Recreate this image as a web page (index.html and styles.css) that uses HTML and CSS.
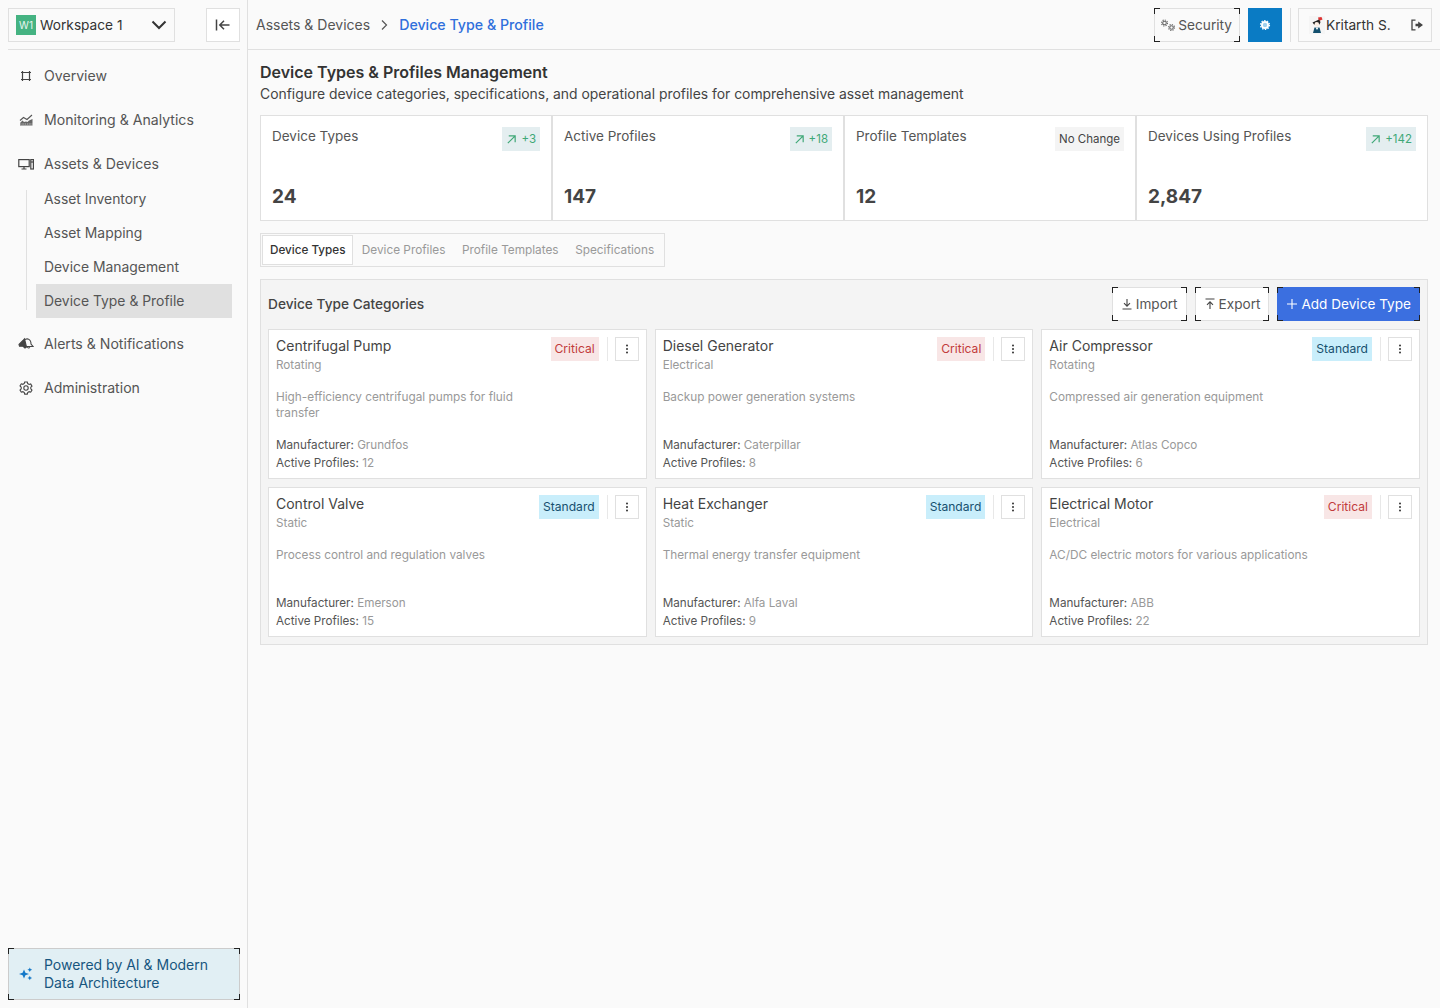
FILE: index.html
```html
<!DOCTYPE html>
<html lang="en">
<head>
<meta charset="utf-8">
<title>Device Type &amp; Profile</title>
<link rel="stylesheet" href="styles.css">
</head>
<body>
<div class="app">
  <aside class="sidebar">
    <div class="side-top">
      <button class="ws-select">
        <span class="ws-badge">W1</span>
        <span class="ws-name">Workspace 1</span>
        <svg class="ws-chev" width="16" height="16" viewBox="0 0 16 16"><path d="M1.500 4.500 8 11l6.500-6.500" fill="none" stroke="#333" stroke-width="2"/></svg>
      </button>
      <button class="collapse">
        <svg width="16" height="16" viewBox="0 0 16 16" fill="none" stroke="#444" stroke-width="1.500"><path d="M1.500 2.500v11M14.500 8H5M9 3.800 4.800 8 9 12.200"/></svg>
      </button>
    </div>
    <nav class="nav">
      <a class="nav-item">
        <svg class="nav-icon" viewBox="0 0 16 16" fill="none" stroke="#444" stroke-width="1.200"><path d="M4.500 3v10M11.500 3v10M3 4.500h10M3 11.500h10"/></svg>
        <span>Overview</span>
      </a>
      <a class="nav-item">
        <svg class="nav-icon" viewBox="0 0 16 16" fill="none" stroke="#555" stroke-width="1.100"><path d="M2 8.500 5.500 5.500 9 7.500 14 3"/><path d="M2 13.500V11l2.500-2.500L6 10l2-.5 1.500.5L11 8.500 14.500 7v6.500z" fill="#666" stroke="none"/><path d="M2 12h12.500" stroke="#fafafa" stroke-width=".6" stroke-dasharray="1.500 .8"/></svg>
        <span>Monitoring &amp; Analytics</span>
      </a>
      <a class="nav-item">
        <svg class="nav-icon" viewBox="0 0 16 16" fill="none" stroke="#444" stroke-width="1.200"><rect x=".8" y="3.600" width="10.400" height="7"/><path d="M3.500 13h5M6 10.500V13"/><rect x="12.800" y="3.600" width="2.600" height="9.400"/><path d="M12.800 6h2.600"/></svg>
        <span>Assets &amp; Devices</span>
      </a>
      <div class="subnav">
        <a class="sub-item">Asset Inventory</a>
        <a class="sub-item">Asset Mapping</a>
        <a class="sub-item">Device Management</a>
        <a class="sub-item active">Device Type &amp; Profile</a>
      </div>
      <a class="nav-item">
        <svg class="nav-icon" viewBox="0 0 16 16" fill="none" stroke="#444" stroke-width="1.100"><path d="M6.500 2.800 5 4.500 1 8.500l.5 1.800H5L7 12l1.500-1z" fill="#444"/><path d="M7.500 3.200c2.500-1 4.800.5 5.300 2.800l.2 2 2 2.500H6.500c-1.500-1-1.800-2-1.600-3.500.2-1.800 1-3.200 2.600-3.800zM9.500 11c.2 1.200 1.700 1.400 2.300.2"/></svg>
        <span>Alerts &amp; Notifications</span>
      </a>
      <a class="nav-item">
        <svg class="nav-icon" viewBox="0 0 16 16" fill="none" stroke="#444" stroke-width="1.100"><path d="M6.700 2h2.600l.4 1.600 1.400.8 1.600-.5 1.300 2.200L12.800 7.200v1.600L14 10l-1.300 2.200-1.600-.5-1.400.8-.4 1.600H6.700l-.4-1.600-1.400-.8-1.600.5L2 10l1.200-1.200V7.200L2 6l1.300-2.200 1.600.5 1.400-.8z"/><circle cx="8" cy="8" r="2.200"/></svg>
        <span>Administration</span>
      </a>
    </nav>
    <div class="ai-note corners">
      <i class="c tl"></i><i class="c tr"></i><i class="c bl"></i><i class="c br"></i>
      <svg class="ai-icon" width="14" height="14" viewBox="0 0 14 14" fill="#1478c8"><path d="M5 2.500 6.400 5.800 10 7 6.400 8.200 5 11.500 3.600 8.200 0 7l3.600-1.200z"/><path d="M10.800.5l.7 1.600 1.700.7-1.700.7-.7 1.600-.7-1.600-1.700-.7 1.700-.7zM10.800 8.800l.7 1.500 1.600.7-1.600.7-.7 1.500-.7-1.500-1.600-.7 1.600-.7z"/></svg>
      <span>Powered by AI &amp; Modern<br>Data Architecture</span>
    </div>
  </aside>
  <div class="main">
    <header class="topbar">
      <div class="crumbs">
        <span class="crumb">Assets &amp; Devices</span>
        <svg width="16" height="16" viewBox="0 0 16 16" fill="none" stroke="#555" stroke-width="1.200"><path d="M6 3.500 10.500 8 6 12.500"/></svg>
        <span class="crumb-current">Device Type &amp; Profile</span>
      </div>
      <div class="top-actions">
        <button class="btn sec corners">
          <i class="c tl"></i><i class="c tr"></i><i class="c bl"></i><i class="c br"></i>
          <svg class="sec-icon" width="17" height="16" viewBox="0 0 17 16" fill="none" stroke="#666"><circle cx="3.500" cy="6" r="1.800" stroke-width="1.100"/><circle cx="3.500" cy="6" r="3" stroke-width="1.100" stroke-dasharray="1.200 1.150"/><circle cx="10.500" cy="10.500" r="1.800" stroke-width="1.100"/><circle cx="10.500" cy="10.500" r="3" stroke-width="1.100" stroke-dasharray="1.200 1.150"/></svg>
          <span>Security</span>
        </button>
        <button class="theme">
          <svg width="14" height="14" viewBox="0 0 14 14" fill="none" stroke="#fff"><circle cx="7" cy="7" r="3.100" stroke-width="1.800" fill="#9fd0ee"/><circle cx="7" cy="7" r="4.500" stroke-width="1.200" stroke-dasharray="1.400 1.430"/></svg>
        </button>
        <span class="vsep"></span>
        <div class="user">
          <svg class="avatar" width="16" height="18" viewBox="0 0 16 18"><rect width="16" height="18" fill="#f5f5f5"/><path d="M9 1.500l3.500-.5 1 2.500L10 5z" fill="#d33"/><path d="M3.500 6.500 10 3.500l1.500 2.500-1 2.500-5 .5z" fill="#222"/><circle cx="7.800" cy="8.300" r="2.300" fill="#fbeee4"/><path d="M4 17l1.500-5.500h5L12 17z" fill="#14506e"/><path d="M6.500 11.500h3L8 14z" fill="#fff"/></svg>
          <span class="user-name">Kritarth S.</span>
          <svg class="logout" width="14" height="14" viewBox="0 0 14 14" fill="none" stroke="#444" stroke-width="1.300"><path d="M5.500 2.200H2v9.600h3.500"/><path d="M5.500 5.800h2.700V3.600L13 7l-4.800 3.400V8.200H5.500z" fill="#444" stroke="none"/></svg>
        </div>
      </div>
    </header>
    <main class="content">
      <h1 class="page-title">Device Types &amp; Profiles Management</h1>
      <p class="page-sub">Configure device categories, specifications, and operational profiles for comprehensive asset management</p>
      <section class="stats">
        <div class="stat">
          <div class="stat-head"><span class="stat-label">Device Types</span><span class="delta"><svg class="arrow" viewBox="0 0 12 12" fill="none" stroke="#3fa877" stroke-width="1.300"><path d="M2 10 10 2M3 2h7v7"/></svg>+3</span></div>
          <div class="stat-value">24</div>
        </div>
        <div class="stat">
          <div class="stat-head"><span class="stat-label">Active Profiles</span><span class="delta"><svg class="arrow" viewBox="0 0 12 12" fill="none" stroke="#3fa877" stroke-width="1.300"><path d="M2 10 10 2M3 2h7v7"/></svg>+18</span></div>
          <div class="stat-value">147</div>
        </div>
        <div class="stat">
          <div class="stat-head"><span class="stat-label">Profile Templates</span><span class="delta flat">No Change</span></div>
          <div class="stat-value">12</div>
        </div>
        <div class="stat">
          <div class="stat-head"><span class="stat-label">Devices Using Profiles</span><span class="delta"><svg class="arrow" viewBox="0 0 12 12" fill="none" stroke="#3fa877" stroke-width="1.300"><path d="M2 10 10 2M3 2h7v7"/></svg>+142</span></div>
          <div class="stat-value">2,847</div>
        </div>
      </section>
      <div class="tabs">
        <span class="tab active">Device Types</span>
        <span class="tab">Device Profiles</span>
        <span class="tab">Profile Templates</span>
        <span class="tab">Specifications</span>
      </div>
      <section class="panel">
        <div class="panel-head">
          <h2 class="panel-title">Device Type Categories</h2>
          <div class="panel-actions">
            <button class="btn pbtn corners">
              <i class="c tl"></i><i class="c tr"></i><i class="c bl"></i><i class="c br"></i>
              <svg width="12" height="12" viewBox="0 0 12 12" fill="none" stroke="#444" stroke-width="1.100"><path d="M6 1v7M3 5.200 6 8.200l3-3M1.500 11h9"/></svg>
              <span>Import</span>
            </button>
            <button class="btn pbtn corners">
              <i class="c tl"></i><i class="c tr"></i><i class="c bl"></i><i class="c br"></i>
              <svg width="12" height="12" viewBox="0 0 12 12" fill="none" stroke="#444" stroke-width="1.100"><path d="M6 11V4M3 6.800 6 3.800l3 3M1.500 1h9"/></svg>
              <span>Export</span>
            </button>
            <button class="btn pbtn primary corners">
              <i class="c tl"></i><i class="c tr"></i><i class="c bl"></i><i class="c br"></i>
              <svg width="12" height="12" viewBox="0 0 12 12" fill="none" stroke="#fff" stroke-width="1.100"><path d="M6 1v10M1 6h10"/></svg>
              <span>Add Device Type</span>
            </button>
          </div>
        </div>
        <div class="cards">
          <article class="card">
            <div class="card-head">
              <div class="card-titles"><h3 class="card-title">Centrifugal Pump</h3><p class="card-kind">Rotating</p></div>
              <span class="tag critical">Critical</span><span class="card-sep"></span>
              <button class="more"><svg width="12" height="12" viewBox="0 0 12 12" fill="#333"><circle cx="6" cy="2.500" r="1"/><circle cx="6" cy="6" r="1"/><circle cx="6" cy="9.500" r="1"/></svg></button>
            </div>
            <p class="card-desc narrow">High-efficiency centrifugal pumps for fluid transfer</p>
            <p class="card-meta"><b>Manufacturer:</b> Grundfos</p>
            <p class="card-meta"><b>Active Profiles:</b> 12</p>
          </article>
          <article class="card">
            <div class="card-head">
              <div class="card-titles"><h3 class="card-title">Diesel Generator</h3><p class="card-kind">Electrical</p></div>
              <span class="tag critical">Critical</span><span class="card-sep"></span>
              <button class="more"><svg width="12" height="12" viewBox="0 0 12 12" fill="#333"><circle cx="6" cy="2.500" r="1"/><circle cx="6" cy="6" r="1"/><circle cx="6" cy="9.500" r="1"/></svg></button>
            </div>
            <p class="card-desc">Backup power generation systems</p>
            <p class="card-meta"><b>Manufacturer:</b> Caterpillar</p>
            <p class="card-meta"><b>Active Profiles:</b> 8</p>
          </article>
          <article class="card">
            <div class="card-head">
              <div class="card-titles"><h3 class="card-title">Air Compressor</h3><p class="card-kind">Rotating</p></div>
              <span class="tag standard">Standard</span><span class="card-sep"></span>
              <button class="more"><svg width="12" height="12" viewBox="0 0 12 12" fill="#333"><circle cx="6" cy="2.500" r="1"/><circle cx="6" cy="6" r="1"/><circle cx="6" cy="9.500" r="1"/></svg></button>
            </div>
            <p class="card-desc">Compressed air generation equipment</p>
            <p class="card-meta"><b>Manufacturer:</b> Atlas Copco</p>
            <p class="card-meta"><b>Active Profiles:</b> 6</p>
          </article>
          <article class="card">
            <div class="card-head">
              <div class="card-titles"><h3 class="card-title">Control Valve</h3><p class="card-kind">Static</p></div>
              <span class="tag standard">Standard</span><span class="card-sep"></span>
              <button class="more"><svg width="12" height="12" viewBox="0 0 12 12" fill="#333"><circle cx="6" cy="2.500" r="1"/><circle cx="6" cy="6" r="1"/><circle cx="6" cy="9.500" r="1"/></svg></button>
            </div>
            <p class="card-desc">Process control and regulation valves</p>
            <p class="card-meta"><b>Manufacturer:</b> Emerson</p>
            <p class="card-meta"><b>Active Profiles:</b> 15</p>
          </article>
          <article class="card">
            <div class="card-head">
              <div class="card-titles"><h3 class="card-title">Heat Exchanger</h3><p class="card-kind">Static</p></div>
              <span class="tag standard">Standard</span><span class="card-sep"></span>
              <button class="more"><svg width="12" height="12" viewBox="0 0 12 12" fill="#333"><circle cx="6" cy="2.500" r="1"/><circle cx="6" cy="6" r="1"/><circle cx="6" cy="9.500" r="1"/></svg></button>
            </div>
            <p class="card-desc">Thermal energy transfer equipment</p>
            <p class="card-meta"><b>Manufacturer:</b> Alfa Laval</p>
            <p class="card-meta"><b>Active Profiles:</b> 9</p>
          </article>
          <article class="card">
            <div class="card-head">
              <div class="card-titles"><h3 class="card-title">Electrical Motor</h3><p class="card-kind">Electrical</p></div>
              <span class="tag critical">Critical</span><span class="card-sep"></span>
              <button class="more"><svg width="12" height="12" viewBox="0 0 12 12" fill="#333"><circle cx="6" cy="2.500" r="1"/><circle cx="6" cy="6" r="1"/><circle cx="6" cy="9.500" r="1"/></svg></button>
            </div>
            <p class="card-desc">AC/DC electric motors for various applications</p>
            <p class="card-meta"><b>Manufacturer:</b> ABB</p>
            <p class="card-meta"><b>Active Profiles:</b> 22</p>
          </article>
        </div>
      </section>
    </main>
  </div>
</div>
</body>
</html>
```
FILE: styles.css
```css
* { box-sizing: border-box; }
html, body { margin: 0; padding: 0; height: 100%; }
body { font-family: Inter, "Liberation Sans", sans-serif; background: #fafafa; color: #444; font-size: 14px; overflow: hidden; }
h1, h2, h3, p { margin: 0; font-weight: 400; }
button { font: inherit; color: inherit; cursor: pointer; }
.app { display: flex; height: 1008px; }

.sidebar { width: 248px; flex: none; border-right: 1px solid #e0e0e0; padding: 8px 7px 8px 8px; display: flex; flex-direction: column; }
.side-top { display: flex; justify-content: space-between; padding-bottom: 7px; border-bottom: 1px solid #e0e0e0; }
.ws-select { width: 167px; height: 34px; display: flex; align-items: center; background: #fafafa; border: 1px solid #e0e0e0; padding: 0 7px; }
.ws-badge { width: 20px; height: 20px; background: #45b382; color: #e8f5ee; font-size: 10px; display: flex; align-items: center; justify-content: center; flex: none; }
.ws-name { margin-left: 4px; font-size: 13.700px; color: #333; flex: 1; text-align: left; }
.collapse { width: 34px; height: 34px; background: #fff; border: 1px solid #e0e0e0; padding: 0; display: flex; align-items: center; justify-content: center; }
.nav { display: flex; flex-direction: column; flex: 1; padding-top: 9px; }
.nav-item { display: flex; align-items: center; flex: none; height: 34px; margin-bottom: 10px; padding-left: 10px; gap: 10px; font-size: 14.100px; color: #555; }
.nav-item span { padding-bottom: 2px; }
.nav-icon { width: 16px; height: 16px; flex: none; }
.subnav { position: relative; margin: -9px 0 9px 18px; display: flex; flex-direction: column; padding-left: 10px; }
.subnav::before { content: ""; position: absolute; left: 0; top: 8px; width: 1px; height: 120px; background: #e0e0e0; }
.sub-item { display: flex; align-items: center; flex: none; height: 34px; width: 196px; padding-left: 8px; font-size: 13.900px; color: #555; }
.active.sub-item { background: #e0e0e0; }
.ai-note { height: 52px; background: #e1eff4; border: 1px solid #ccc; display: flex; align-items: center; gap: 11px; padding: 0 10px; font-size: 14px; line-height: 18px; color: #17567f; }
.ai-icon { flex: none; }

.corners { position: relative; }
.c { position: absolute; width: 6px; height: 6px; border: 0 solid #222; pointer-events: none; }
.c.tl { top: -1px; left: -1px; border-width: 1px 0 0 1px; }
.c.tr { top: -1px; right: -1px; border-width: 1px 1px 0 0; }
.c.bl { bottom: -1px; left: -1px; border-width: 0 0 1px 1px; }
.c.br { bottom: -1px; right: -1px; border-width: 0 1px 1px 0; }

.main { flex: 1; min-width: 0; display: flex; flex-direction: column; }
.topbar { height: 50px; flex: none; border-bottom: 1px solid #e0e0e0; display: flex; align-items: center; justify-content: space-between; padding: 0 8px; }
.crumbs { display: flex; align-items: center; gap: 6px; font-size: 14px; }
.crumb { color: #555; }
.crumb-current { color: #2f6fdc; font-weight: 500; margin-left: 1px; font-size: 14.200px; }
.top-actions { display: flex; align-items: center; gap: 8px; }
.btn { display: inline-flex; align-items: center; height: 34px; background: #fafafa; border: 1px solid #e0e0e0; padding: 0 7px; font-size: 13.700px; color: #555; }
.sec-icon { margin-left: -1px; }
.theme { width: 34px; height: 34px; border: 0; background: #0a7bc4; padding: 0; display: flex; align-items: center; justify-content: center; }
.vsep { width: 1px; height: 34px; background: #e0e0e0; margin-right: -1px; }
.user { width: 134px; height: 34px; display: flex; align-items: center; border: 1px solid #e0e0e0; padding: 0 7px 0 10px; }
.avatar { margin-right: 1px; flex: none; }
.user-name { flex: 1; font-size: 13.700px; color: #333; }
.logout { flex: none; }

.content { padding: 11px 12px 0; }
.page-title { font-size: 16px; font-weight: 600; color: #333; line-height: 22px; }
.page-sub { font-size: 13.900px; line-height: 20px; color: #444; margin-top: 1px; }
.stats { display: grid; grid-template-columns: repeat(4, 1fr); margin-top: 11px; }
.stat { background: #fff; border: 1px solid #e0e0e0; height: 106px; padding: 11px 11px 10px; display: flex; flex-direction: column; justify-content: space-between; }
.stat-head { display: flex; justify-content: space-between; align-items: flex-start; }
.stat-label { font-size: 13.500px; color: #555; line-height: 20px; margin-top: -1px; }
.delta { display: inline-flex; align-items: center; gap: 4px; height: 24px; padding: 0 4px; background: #e4eef0; color: #3fa877; font-size: 11.500px; }
.delta.flat { background: #f4f4f4; color: #444; }
.arrow { width: 11px; height: 11px; }
.stat-value { font-size: 19px; font-weight: 700; color: #444; line-height: 26px; }
.tabs { display: inline-flex; margin-top: 12px; background: #fafafa; border: 1px solid #e0e0e0; padding: 1px 2px 1px 1px; height: 34px; align-items: stretch; vertical-align: top; }
.tab { display: flex; align-items: center; padding: 0 8.300px; font-size: 11.800px; color: #999; }
.tab.active { background: #fff; color: #333; border: 1px solid #e0e0e0; font-weight: 500; padding: 0 7px; font-size: 11.700px; }
.panel { margin-top: 12px; background: #f4f4f4; border: 1px solid #e0e0e0; padding: 7px; }
.panel-head { display: flex; justify-content: space-between; align-items: center; height: 34px; }
.panel-title { font-size: 13.700px; color: #444; font-weight: 500; }
.panel-actions { display: flex; gap: 8px; }
.pbtn { background: #fff; gap: 3px; padding: 0 8px; font-size: 13.600px; }
.primary { background: #3b6fe0; border-color: #3b6fe0; color: #fff; }
.cards { display: grid; grid-template-columns: repeat(3, 1fr); gap: 8px; margin-top: 8px; }
.card { background: #fff; border: 1px solid #e0e0e0; height: 150px; padding: 7px; display: flex; flex-direction: column; }
.card-head { display: flex; align-items: flex-start; height: 40px; flex: none; }
.card-titles { flex: 1; min-width: 0; }
.card-title { font-size: 14px; line-height: 18px; color: #444; }
.card-kind { font-size: 11.700px; line-height: 20px; color: #999; }
.tag { height: 24px; padding: 0 4px 1px; font-size: 12.100px; display: flex; align-items: center; }
.critical { background: #f8e6e6; color: #c23b3b; }
.standard { background: #c9eefb; color: #17506f; }
.card-sep { width: 1px; height: 24px; background: #e8e8e8; margin: 0 7px 0 8px; }
.more { width: 24px; height: 24px; background: #fff; border: 1px solid #e0e0e0; padding: 0; display: flex; align-items: center; justify-content: center; }
.card-desc { font-size: 11.800px; line-height: 16px; color: #999; height: 47px; margin-top: 12px; flex: none; }
.card-desc.narrow { max-width: 260px; }
.card-meta { font-size: 11.700px; line-height: 18px; color: #999; }
.card-meta b { font-weight: 400; color: #555; }
```
